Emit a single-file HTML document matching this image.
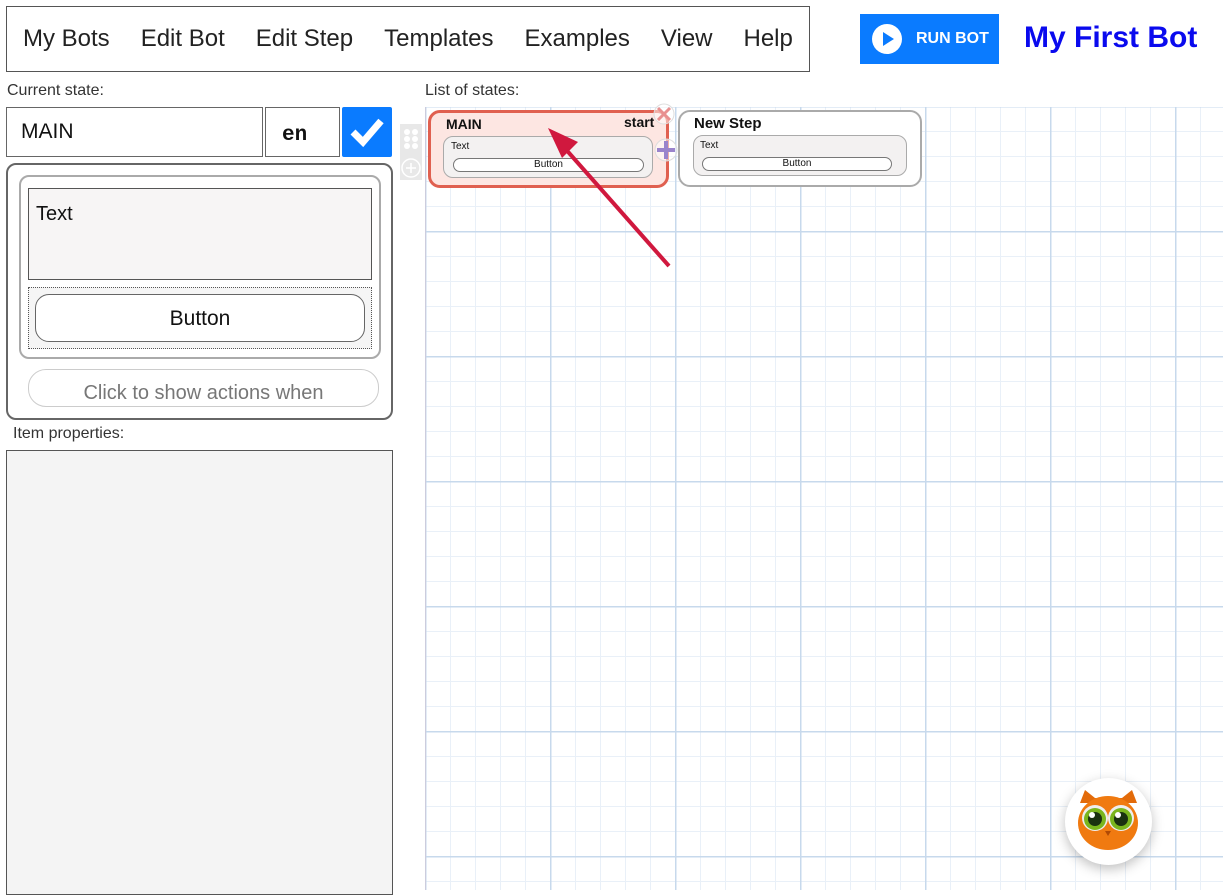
<!DOCTYPE html>
<html><head><meta charset="utf-8"><style>
*{box-sizing:border-box;margin:0;padding:0}
body{width:1223px;height:890px;overflow:hidden;background:#fff;font-family:"Liberation Sans",sans-serif;position:relative;color:#111}
.abs{position:absolute}
.menu{left:6px;top:6px;width:804px;height:66px;border:1px solid #555;display:flex;align-items:center;font-size:24px;color:#222}
.menu span{margin-left:16px;margin-right:15px}
.mono{font-family:"Liberation Mono","DejaVu Sans Mono",monospace}
.grid{left:425px;top:107px;width:798px;height:783px;border-left:1px solid #ccd;
background-color:#fff;
background-image:
linear-gradient(#c7d9ec 1.5px,transparent 1.5px),
linear-gradient(90deg,#c7d9ec 1.5px,transparent 1.5px),
linear-gradient(#e9f0f8 1px,transparent 1px),
linear-gradient(90deg,#e9f0f8 1px,transparent 1px);
background-size:125px 125px,125px 125px,25px 25px,25px 25px;background-position:-1px -1px,-1px -1px,-1px -1px,-1px -1px}
.card{border-radius:12px;border:2.5px solid #aaa;background:#fff}
.inner{border:1px solid #aaa;border-radius:10px;background:#f3f1f1}
.pill{border:1px solid #777;border-radius:10px;background:#fff;text-align:center;font-size:10px}
</style></head><body>
<div class="abs menu"><span>My Bots</span><span>Edit Bot</span><span>Edit Step</span><span>Templates</span><span>Examples</span><span>View</span><span>Help</span></div>
<div class="abs" style="left:860px;top:14px;width:139px;height:50px;background:#0a7bff;color:#fff;font-weight:bold;font-size:16px;display:flex;align-items:center">
<svg width="30" height="30" style="margin-left:12px;margin-right:14px" viewBox="0 0 30 30"><circle cx="15" cy="15" r="15" fill="#fff"/><path d="M11 8 L22 15 L11 22Z" fill="#0a7bff"/></svg>RUN BOT</div>
<div class="abs" style="left:1024px;top:21px;font-size:30px;font-weight:bold;color:#0a0aee">My First Bot</div>

<div class="abs" style="left:7px;top:82px;font-size:16px;color:#333">Current state:</div>
<div class="abs" style="left:6px;top:107px;width:257px;height:50px;border:1px solid #666;font-size:21px;padding:12px 0 0 14px">MAIN</div>
<div class="abs mono" style="left:265px;top:107px;width:75px;height:50px;border:1px solid #666;font-weight:bold;font-size:21px;padding:16px 0 0 16px">en</div>
<div class="abs" style="left:342px;top:107px;width:50px;height:50px;background:#0a7bff;border-radius:2px">
<svg width="50" height="50"><path d="M11 25 L21 35 L39 14" stroke="#fff" stroke-width="7" fill="none"/></svg></div>

<div class="abs" style="left:6px;top:163px;width:387px;height:257px;border:2px solid #666;border-radius:10px"></div>
<div class="abs" style="left:19px;top:175px;width:362px;height:184px;border:2px solid #aaa;border-radius:10px"></div>
<div class="abs" style="left:28px;top:188px;width:344px;height:92px;border:1px solid #555;background:#f7f5f5;font-size:20px;padding:14px 0 0 7px">Text</div>
<div class="abs" style="left:28px;top:287px;width:344px;height:62px;border:1px dotted #555;background:#f5f5f5"></div>
<div class="abs" style="left:35px;top:294px;width:330px;height:48px;border:1px solid #666;border-radius:14px;background:#fff;font-size:21px;text-align:center;line-height:48px">Button</div>
<div class="abs" style="left:28px;top:369px;width:351px;height:38px;border:1px solid #ccc;border-radius:18px;font-size:20px;color:#777;text-align:center;line-height:46px;overflow:hidden">Click to show actions when</div>
<div class="abs" style="left:13px;top:425px;font-size:16px;color:#333">Item properties:</div>
<div class="abs" style="left:6px;top:450px;width:387px;height:445px;border:1px solid #555;background:#f4f4f4"></div>

<div class="abs" style="left:425px;top:82px;font-size:16px;color:#333">List of states:</div>
<div class="abs grid"></div>
<div class="abs" style="left:400px;top:124px;width:22px;height:56px;background:#e8e8e8">
<svg width="22" height="56"><g fill="#fff"><circle cx="7" cy="8" r="3"/><circle cx="15" cy="8" r="3"/><circle cx="7" cy="15" r="3"/><circle cx="15" cy="15" r="3"/><circle cx="7" cy="22" r="3"/><circle cx="15" cy="22" r="3"/></g><circle cx="11" cy="44" r="9" fill="none" stroke="#fff" stroke-width="1.5"/><path d="M6 44h10M11 39v10" stroke="#fff" stroke-width="1.5"/></svg></div>

<div class="abs card" style="left:428px;top:110px;width:241px;height:78px;border-color:#e06050;background:#fde6e2;border-width:3px"></div>
<div class="abs" style="left:446px;top:116px;font-size:14px;font-weight:bold">MAIN</div>
<div class="abs" style="left:624px;top:114px;font-size:14px;font-weight:bold">start</div>
<div class="abs inner" style="left:443px;top:136px;width:210px;height:42px"></div>
<div class="abs" style="left:451px;top:141px;font-size:10px">Text</div>
<div class="abs pill" style="left:453px;top:158px;width:191px;height:14px;line-height:12px">Button</div>

<div class="abs card" style="left:678px;top:110px;width:244px;height:77px"></div>
<div class="abs" style="left:694px;top:115px;font-size:15px;font-weight:bold">New Step</div>
<div class="abs inner" style="left:693px;top:135px;width:214px;height:41px"></div>
<div class="abs" style="left:700px;top:140px;font-size:10px">Text</div>
<div class="abs pill" style="left:702px;top:157px;width:190px;height:14px;line-height:12px">Button</div>

<svg class="abs" style="left:650px;top:103px" width="30" height="62">
<circle cx="14" cy="11" r="10" fill="#fff" fill-opacity=".5" stroke="#ddd"/><path d="M8 5l12 12M20 5L8 17" stroke="#e89090" stroke-width="3"/>
<circle cx="16" cy="47" r="11" fill="#fff" fill-opacity=".5" stroke="#ddd"/><path d="M7 47h18M16 38v18" stroke="#9a84cc" stroke-width="4"/></svg>

<svg class="abs" style="left:540px;top:120px" width="140" height="150">
<path d="M129 146 L22 25" stroke="#d0183e" stroke-width="4"/><path d="M8 8 L38 22 L22 38Z" fill="#d0183e"/></svg>

<div class="abs" style="left:1065px;top:778px;width:87px;height:87px;border-radius:50%;background:#fff;box-shadow:0 4px 12px rgba(0,0,0,.25)">
<svg width="87" height="87" viewBox="0 0 87 87">
<path d="M15 25 L20 12 L30 20 L57 20 L67 12 L72 25 Z" fill="#e36b0a"/>
<ellipse cx="43" cy="45" rx="30" ry="27" fill="#f07a10"/>
<circle cx="30" cy="40" r="13" fill="#eee"/><circle cx="56" cy="40" r="13" fill="#eee"/>
<circle cx="30" cy="41" r="11" fill="#7ab51d"/><circle cx="56" cy="41" r="11" fill="#7ab51d"/>
<circle cx="30" cy="41" r="7" fill="#1a3010"/><circle cx="56" cy="41" r="7" fill="#1a3010"/>
<circle cx="27" cy="37" r="3" fill="#fff"/><circle cx="53" cy="37" r="3" fill="#fff"/>
<path d="M40 53 L46 53 L43 58Z" fill="#b04a05"/></svg></div>
</body></html>
